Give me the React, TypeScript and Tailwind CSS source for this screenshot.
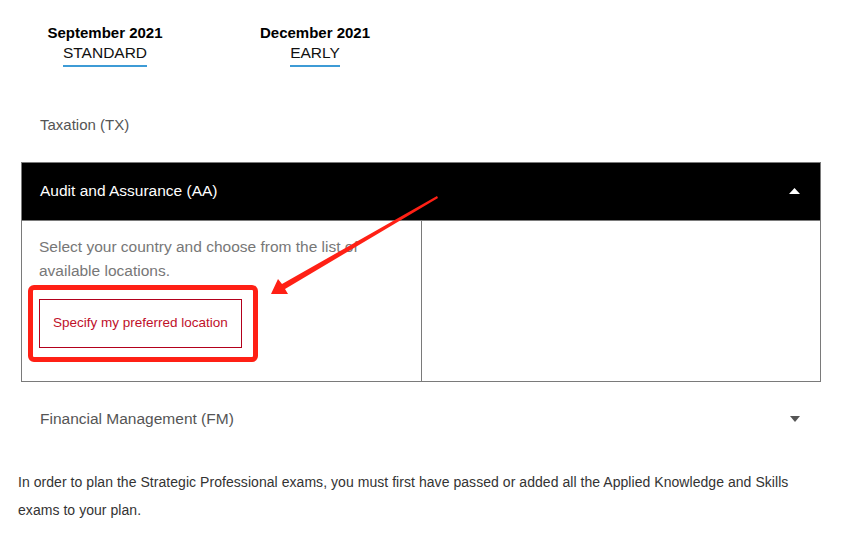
import React from "react";

export default function App() {
  return (
    <div className="relative w-[845px] h-[536px] bg-white overflow-hidden font-['Liberation_Sans',Arial,sans-serif]">
      {/* Exam sessions */}
      <div className="flex pt-[24px]">
        <div className="w-[210px] flex flex-col items-center">
          <div className="text-[15px] font-bold leading-[17px] text-black">September 2021</div>
          <div className="mt-[3px] text-[15.5px] leading-[18px] text-[#111] pb-[3px] border-b-2 border-[#3d9bd6]">STANDARD</div>
        </div>
        <div className="w-[210px] flex flex-col items-center">
          <div className="text-[15px] font-bold leading-[17px] text-black">December 2021</div>
          <div className="mt-[3px] text-[15.5px] leading-[18px] text-[#111] pb-[3px] border-b-2 border-[#3d9bd6]">EARLY</div>
        </div>
      </div>

      {/* Taxation */}
      <div className="mt-[48px] pl-[40px] text-[15px] leading-[20px] text-[#555]">Taxation (TX)</div>

      {/* Accordion open */}
      <div className="mt-[27px] ml-[21px] w-[800px] border border-[#7a7a7a]">
        <div className="h-[57px] bg-black flex items-center justify-between pl-[18px] pr-[20px]">
          <span className="text-[15.5px] leading-[20px] text-white -mt-[2px]">Audit and Assurance (AA)</span>
          <svg width="11" height="6" viewBox="0 0 11 6" className="-mt-[2px]">
            <polygon points="0,6 5.5,0 11,6" fill="#fff" />
          </svg>
        </div>
        <div className="grid grid-cols-[400px_1fr] h-[161px] border-t border-[#7a7a7a]">
          <div className="border-r border-[#7a7a7a] pl-[17px] pt-[14px]">
            <p className="text-[15.5px] leading-[24px] text-[#777] w-[345px]">
              Select your country and choose from the list of available locations.
            </p>
            <button className="mt-[16px] w-[203px] h-[49px] border border-[#b3001b] text-left pl-[13px] text-[13.5px] text-[#c0102a] bg-white">
              Specify my preferred location
            </button>
          </div>
          <div />
        </div>
      </div>

      {/* Financial Management */}
      <div className="mt-[27px] ml-[21px] w-[800px] pl-[19px] pr-[21px] flex items-center justify-between">
        <span className="text-[15.5px] leading-[20px] text-[#555]">Financial Management (FM)</span>
        <svg width="10" height="6" viewBox="0 0 10 6">
          <polygon points="0,0 10,0 5,6" fill="#555" />
        </svg>
      </div>

      <p className="mt-[39px] pl-[18px] w-[800px] text-[14px] leading-[28px] tracking-[0.05px] text-[#333]">
        In order to plan the Strategic Professional exams, you must first have passed or added all the Applied Knowledge and Skills exams to your plan.
      </p>

      {/* Annotation overlay: red box */}
      <div className="absolute left-[28px] top-[285px] w-[230px] h-[77px] border-[5px] border-[#ff2015] rounded-[6px]" />

      {/* Annotation overlay: red arrow */}
      <svg className="absolute left-0 top-0" width="845" height="536" viewBox="0 0 845 536">
        <polygon
          points="271,294 278,279 282,284 437,196 438,198 285,289 288,294"
          fill="#ff2015"
        />
      </svg>
    </div>
  );
}
